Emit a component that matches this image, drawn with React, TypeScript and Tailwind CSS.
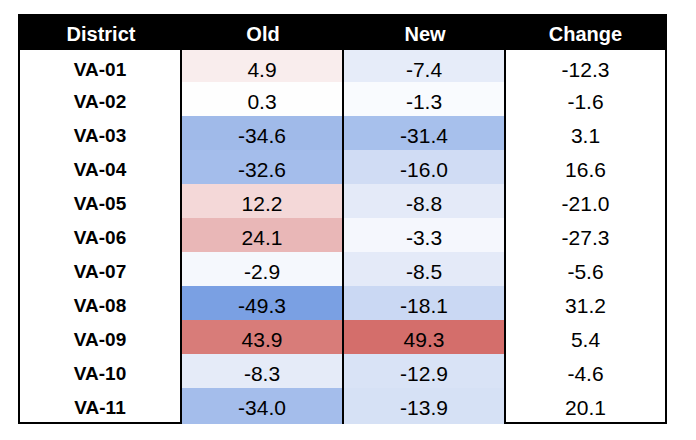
const rows = [
  { d: "VA-01", old: "4.9", oldBg: "bg-[#f9eded]", nu: "-7.4", nuBg: "bg-[#e6ecf9]", ch: "-12.3" },
  { d: "VA-02", old: "0.3", oldBg: "bg-[#fefefe]", nu: "-1.3", nuBg: "bg-[#f9fbfe]", ch: "-1.6" },
  { d: "VA-03", old: "-34.6", oldBg: "bg-[#a0bae9]", nu: "-31.4", nuBg: "bg-[#a7c0ec]", ch: "3.1" },
  { d: "VA-04", old: "-32.6", oldBg: "bg-[#a4bdeb]", nu: "-16.0", nuBg: "bg-[#d0dcf4]", ch: "16.6" },
  { d: "VA-05", old: "12.2", oldBg: "bg-[#f4d8d8]", nu: "-8.8", nuBg: "bg-[#e4eaf8]", ch: "-21.0" },
  { d: "VA-06", old: "24.1", oldBg: "bg-[#e9b7b7]", nu: "-3.3", nuBg: "bg-[#f5f7fd]", ch: "-27.3" },
  { d: "VA-07", old: "-2.9", oldBg: "bg-[#f5f8fd]", nu: "-8.5", nuBg: "bg-[#e4eaf8]", ch: "-5.6" },
  { d: "VA-08", old: "-49.3", oldBg: "bg-[#7aa0e3]", nu: "-18.1", nuBg: "bg-[#cad8f3]", ch: "31.2" },
  { d: "VA-09", old: "43.9", oldBg: "bg-[#d87c79]", nu: "49.3", nuBg: "bg-[#d46e6b]", ch: "5.4" },
  { d: "VA-10", old: "-8.3", oldBg: "bg-[#e5ebf8]", nu: "-12.9", nuBg: "bg-[#d9e3f6]", ch: "-4.6" },
  { d: "VA-11", old: "-34.0", oldBg: "bg-[#a4bdeb]", nu: "-13.9", nuBg: "bg-[#d6e1f5]", ch: "20.1" },
];

export default function App() {
  return (
    <div className="w-[696px] h-[440px] bg-white pt-[14px] pl-[18px] font-['Liberation_Sans',Arial,sans-serif] text-black">
      <div className="w-[649px] border-2 border-black">
        {/* header */}
        <div className="grid grid-cols-[162px_162px_162px_159px] h-[34px] bg-black text-white font-bold text-[20px]">
          <div className="flex items-center justify-center pt-[2px]">District</div>
          <div className="flex items-center justify-center pt-[2px]">Old</div>
          <div className="flex items-center justify-center pt-[2px]">New</div>
          <div className="flex items-center justify-center pt-[2px]">Change</div>
        </div>
        {rows.map((r, i) => (
          <div
            key={r.d}
            className={`grid grid-cols-[162px_162px_162px_159px] text-[21px] ${i === 0 ? "h-[32px]" : "h-[34px]"}`}
          >
            <div className="flex items-center justify-center pt-[4px] border-r-2 border-black font-bold text-[19px]">{r.d}</div>
            <div className={`flex items-center justify-center pt-[4px] border-r-2 border-black ${r.oldBg}`}>{r.old}</div>
            <div className={`flex items-center justify-center pt-[4px] border-r-2 border-black ${r.nuBg}`}>{r.nu}</div>
            <div className="flex items-center justify-center pt-[4px]">{r.ch}</div>
          </div>
        ))}
      </div>
    </div>
  );
}
